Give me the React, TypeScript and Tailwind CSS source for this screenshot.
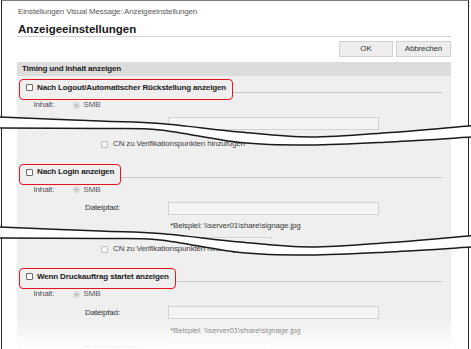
import type { ReactNode } from 'react';

// torn-edge shape, measured off the first tear; the second one sits 110px lower
const TOP = [[-2, 117], [100, 121], [160, 123.5], [240, 132], [310, 137], [390, 132.5], [473, 125.5]];
const LOW = [[-2, 128], [100, 128.5], [160, 130], [240, 142.5], [310, 145], [390, 142], [473, 137]];

function curve(pts: number[][]) {
  let d = `M${pts[0][0]} ${pts[0][1]}`;
  for (let i = 0; i < pts.length - 1; i++) {
    const p0 = pts[i - 1] ?? pts[i];
    const p1 = pts[i];
    const p2 = pts[i + 1];
    const p3 = pts[i + 2] ?? p2;
    const c1 = [p1[0] + (p2[0] - p0[0]) / 6, p1[1] + (p2[1] - p0[1]) / 6];
    const c2 = [p2[0] - (p3[0] - p1[0]) / 6, p2[1] - (p3[1] - p1[1]) / 6];
    d += ` C${c1[0]} ${c1[1]} ${c2[0]} ${c2[1]} ${p2[0]} ${p2[1]}`;
  }
  return d;
}

function Tear({ dy }: { dy: number }) {
  const band = `${curve(TOP)} ${curve([...LOW].reverse()).replace('M', 'L')} Z`;
  return (
    <g transform={`translate(0 ${dy})`}>
      <path d={band} fill="white" />
      <path d={curve(TOP)} fill="none" stroke="#1a1a1a" strokeWidth={1.5} />
      <path d={curve(LOW)} fill="none" stroke="#1a1a1a" strokeWidth={1.5} />
    </g>
  );
}

function Slice({ className, children }: { className: string; children: ReactNode }) {
  return (
    <div className={`ml-px w-[468px] overflow-hidden border-x border-x-[#262626] bg-white pl-[15px] pr-[17px] ${className}`}>
      {children}
    </div>
  );
}

function Check({ off }: { off?: boolean }) {
  return (
    <span
      className={
        off
          ? 'block h-[7px] w-[7px] shrink-0 rounded-[1px] border border-[#bdbdbd] bg-[#f6f6f6]'
          : 'block h-[7px] w-[7px] shrink-0 rounded-[1px] border border-[#6b6b6b] bg-white'
      }
    />
  );
}

function Radio() {
  return (
    <span className="flex h-[7px] w-[7px] shrink-0 items-center justify-center rounded-full border border-[#d2d2d2] bg-[#e4e4e4]">
      <span className="h-[3px] w-[3px] rounded-full bg-[#bcbcbc]" />
    </span>
  );
}

function Btn({ w, children }: { w: string; children: ReactNode }) {
  return (
    <div className={`${w} flex h-[16px] items-center justify-center border border-[#d2d2d2] bg-[#ededed] text-[#333]`}>
      {children}
    </div>
  );
}

function CnRow() {
  return (
    <div className="flex h-[10px] items-center pl-[84px]">
      <Check off />
      <span className="ml-[5px] whitespace-nowrap text-[#444]">CN zu Verifikationspunkten hinzufügen</span>
    </div>
  );
}

function Block({ label }: { label: string }) {
  return (
    <>
      <div className="flex items-start">
        <div className="ml-[2px] flex h-[21px] items-center gap-[4px] rounded-[4px] border-[1.5px] border-[#e5141f] pb-[4px] pl-[6px] pr-[6px]">
          <Check />
          <span className="whitespace-nowrap font-bold text-[#1a1a1a]">{label}</span>
        </div>
        <div className="mr-[8px] mt-[13px] h-px flex-1 bg-[#c8c8c8]" />
      </div>
      <div className="flex h-[10px] items-center pl-[16.5px]">
        <span className="w-[39px] text-[#505050]">Inhalt:</span>
        <Radio />
        <span className="ml-[4px] text-[#5a5a5a]">SMB</span>
      </div>
      <div className="mt-[7px] flex h-[13px] items-center pl-[68px]">
        <span className="w-[83px] text-[#333]">Dateipfad:</span>
        <div className="h-[13px] w-[211px] border border-[#d3d3d3] bg-[#f4f4f4]" />
      </div>
      <div className="mt-[6.5px] h-[10px] whitespace-nowrap pl-[153px] text-[#3a3a3a]">
        {'*Beispiel: \\\\server01\\share\\signage.jpg'}
      </div>
      <div className="mt-[6px] flex h-[13px] items-center pl-[68px]">
        <span className="w-[83px] text-[#333]">Benutzername:</span>
        <div className="h-[13px] w-[104px] border border-[#d3d3d3] bg-[#f4f4f4]" />
      </div>
    </>
  );
}

export default function App() {
  return (
    <div className="relative h-[349px] w-[471px] overflow-hidden bg-white font-['Liberation_Sans',Arial,sans-serif] text-[8px] leading-[10px] tracking-[-0.15px] text-[#333]">
      {/* slice 1: page head + first option */}
      <Slice className="h-[132px] border-t border-t-[#7a7a7a]">
        <div className="pl-px pt-[6px] text-[#5a5a5a]">Einstellungen Visual Message: Anzeigeeinstellungen</div>
        <div className="mt-[5px] border-b border-[#d4d4d4] pl-px text-[11.5px] font-bold leading-[14px] tracking-normal text-[#1a1a1a]">
          Anzeigeeinstellungen
        </div>
        <div className="mt-[4px] flex justify-end gap-[3px]">
          <Btn w="w-[54px]">OK</Btn>
          <Btn w="w-[55px]">Abbrechen</Btn>
        </div>
        <div className="mt-[5px] flex h-[14px] items-center bg-[#dcdcdc] pl-[5px] font-bold text-[#1a1a1a]">
          Timing und Inhalt anzeigen
        </div>
        <div className="h-[120px] bg-[#efefef] pt-[3px]">
          <Block label="Nach Logout/Automatischer Rückstellung anzeigen" />
        </div>
      </Slice>

      {/* slice 2 */}
      <Slice className="h-[107px]">
        <div className="h-full bg-[#efefef] pt-[7px]">
          <CnRow />
          <div className="mt-[14.5px]">
            <Block label="Nach Login anzeigen" />
          </div>
        </div>
      </Slice>

      {/* slice 3, fades out at the bottom */}
      <Slice className="relative h-[110px]">
        <div className="h-full bg-[#efefef] pt-[5px]">
          <CnRow />
          <div className="mt-[14px]">
            <Block label="Wenn Druckauftrag startet anzeigen" />
          </div>
        </div>
        <div className="absolute inset-x-0 bottom-0 h-[31px] bg-linear-to-b from-white/0 to-white" />
      </Slice>

      <svg className="pointer-events-none absolute left-0 top-0" width={471} height={349}>
        <Tear dy={0} />
        <Tear dy={110} />
      </svg>
    </div>
  );
}
